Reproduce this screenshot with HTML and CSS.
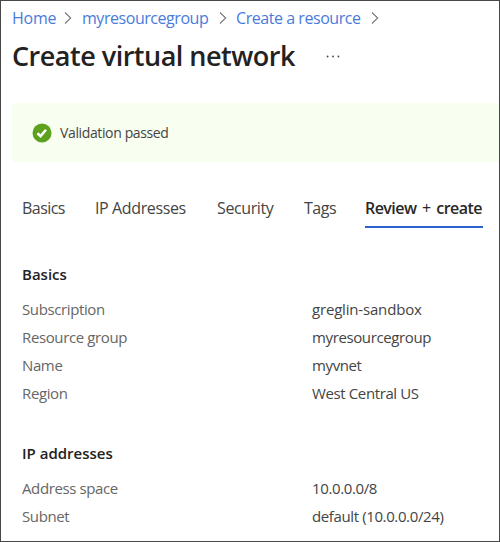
FILE: index.html
```html
<!DOCTYPE html>
<html lang="en">
<head>
<meta charset="utf-8">
<title>Create virtual network</title>
<link rel="stylesheet" href="styles.css">
</head>
<body>
<div class="page">
  <nav class="breadcrumb">
    <a class="crumb crumb-home">Home</a>
    <svg class="chevron" viewBox="0 0 8 14"><path d="M1 1.5 6.7 7 1 12.5"/></svg>
    <a class="crumb crumb-group">myresourcegroup</a>
    <svg class="chevron" viewBox="0 0 8 14"><path d="M1 1.5 6.7 7 1 12.5"/></svg>
    <a class="crumb crumb-create">Create a resource</a>
    <svg class="chevron" viewBox="0 0 8 14"><path d="M1 1.5 6.7 7 1 12.5"/></svg>
  </nav>
  <header class="heading">
    <h1 class="title">Create virtual network</h1>
    <svg class="more" viewBox="0 0 14 4"><circle cx="1.6" cy="2.5" r="0.9"/><circle cx="7" cy="2.5" r="0.9"/><circle cx="12.4" cy="2.5" r="0.9"/></svg>
  </header>
  <div class="banner">
    <svg class="check" viewBox="0 0 20 20"><circle cx="10" cy="10" r="9.5"/><path d="M5.4 10.2 8.6 13.1 14 6.8"/></svg>
    <span class="banner-text">Validation passed</span>
  </div>
  <nav class="tabs">
    <a class="tab tab-basics">Basics</a>
    <a class="tab tab-ip">IP Addresses</a>
    <a class="tab tab-security">Security</a>
    <a class="tab tab-tags">Tags</a>
    <a class="tab tab-review">Review <span class="plus">+</span> create</a>
  </nav>
  <section class="section">
    <h2 class="section-title">Basics</h2>
    <dl class="details">
      <dt>Subscription</dt><dd class="loose">greglin-sandbox</dd>
      <dt>Resource group</dt><dd>myresourcegroup</dd>
      <dt>Name</dt><dd>myvnet</dd>
      <dt>Region</dt><dd>West Central US</dd>
    </dl>
  </section>
  <section class="section">
    <h2 class="section-title">IP addresses</h2>
    <dl class="details">
      <dt>Address space</dt><dd>10.0.0.0/8</dd>
      <dt>Subnet</dt><dd>default (10.0.0.0/24)</dd>
    </dl>
  </section>
</div>
</body>
</html>
```
FILE: styles.css
```css
* { box-sizing: border-box; }

body {
  margin: 0;
  background: #fff;
  color: #444;
  font: 15px/28px "Open Sans", sans-serif;
}

.page {
  width: 500px;
  height: 542px;
  border: 1px solid #484848;
  overflow: hidden;
}

.breadcrumb {
  display: flex;
  align-items: center;
  height: 33px;
  padding-left: 11px;
  font-size: 16px;
  white-space: nowrap;
}

.crumb { color: #4a7bdc; letter-spacing: -0.45px; }
.crumb-home { width: 52px; letter-spacing: -0.25px; }
.crumb-group { width: 137px; margin-left: 10px; }
.crumb-create { width: 135px; margin-left: 9px; }

.chevron {
  flex: none;
  width: 8px;
  height: 14px;
  fill: none;
  stroke: #777;
  stroke-width: 1.1;
}

.heading {
  display: flex;
  align-items: center;
  height: 44px;
  padding-left: 11px;
}

.title {
  width: 314px;
  margin: 0;
  color: #222;
  font-size: 27px;
  font-weight: 600;
  line-height: 44px;
  letter-spacing: -0.5px;
  white-space: nowrap;
}

.more { width: 14px; height: 4px; fill: #444; }

.banner {
  display: flex;
  align-items: center;
  height: 59px;
  margin: 25px 0 0 11px;
  padding-left: 20px;
  border-radius: 3px 0 0 3px;
  background: #f8fff0;
  font-size: 14px;
}

.check { width: 20px; height: 20px; margin-right: 8px; }
.check circle { fill: #5da11e; }
.check path { fill: none; stroke: #fff; stroke-width: 2.5; }
.banner-text { letter-spacing: -0.37px; }

.tabs {
  display: flex;
  height: 38px;
  margin: 28px 0 0 21px;
  font-size: 16px;
  line-height: 36px;
  white-space: nowrap;
}

.tab { letter-spacing: -0.38px; }
.tab-basics { width: 73px; letter-spacing: -0.55px; }
.tab-ip { width: 122px; }
.tab-security { width: 87px; }
.tab-tags { width: 61px; letter-spacing: -0.45px; }
.tab-review {
  width: 118px;
  border-bottom: 2px solid #2b62cd;
  color: #292827;
  font-weight: 600;
  letter-spacing: -0.55px;
  word-spacing: 2px;
}
.plus { font-weight: 400; }

.section { margin: 32px 0 0 21px; }

.section-title {
  margin: 0 0 7px;
  color: #222;
  font-size: 15px;
  font-weight: 600;
  line-height: 28px;
}

.details {
  display: grid;
  grid-template-columns: 290px auto;
  grid-auto-rows: 28px;
  margin: 0;
}

dt, dd { letter-spacing: -0.38px; }
dt { color: #666; }
dd { margin: 0; color: #444; }
.loose { letter-spacing: -0.18px; }
```
